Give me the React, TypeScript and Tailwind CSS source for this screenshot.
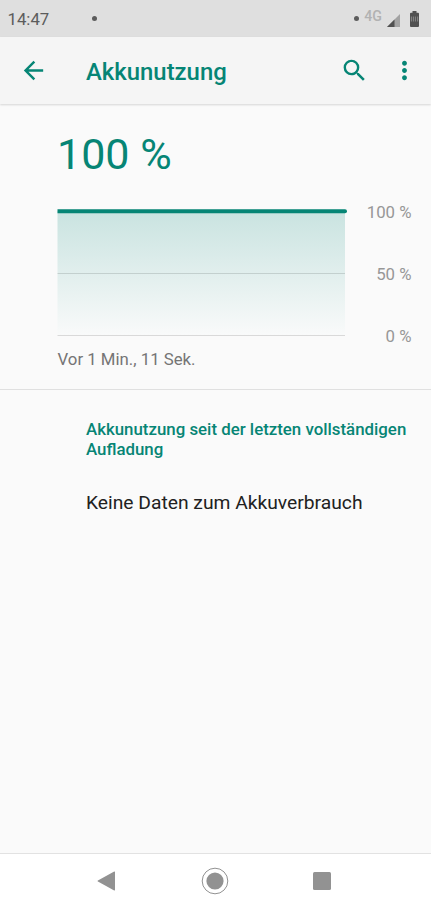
import React from 'react';

const axisLabels = ['100 %', '50 %', '0 %'];

const StatusBar: React.FC = () => (
  <div className="flex h-[37px] shrink-0 items-center bg-[#dfdfdf] pr-3 pl-[7.5px] text-[#5c5c5c]">
    <span className="w-[84.5px] text-[16.8px] leading-5">14:47</span>
    <span className="size-[5px] rounded-full bg-[#5c5c5c]" />
    <span className="ml-auto size-[5px] rounded-full bg-[#5c5c5c]" />
    <span className="mb-1.5 ml-[5px] text-[14.2px] leading-4 font-medium text-[#b2b2b2]">4G</span>
    <svg className="mt-1 ml-[5px]" width="13" height="13" viewBox="0 0 13 13">
      <path d="M13 0v13H0z" fill="#a3a3a3" />
      <path d="M7.5 5.5V13H0z" fill="#515151" />
    </svg>
    <svg className="ml-2.5" width="9" height="16" viewBox="0 0 9 16">
      <path d="M2.5 0h4v1.7H8a1 1 0 0 1 1 1V15a1 1 0 0 1-1 1H1a1 1 0 0 1-1-1V2.7a1 1 0 0 1 1-1h1.5z" fill="#515151" />
      <path d="M1.4 5.5v5M3.4 5.5v5M5.4 5.5v5M7.6 5.5v5" stroke="#8f8f8f" strokeWidth="0.9" />
    </svg>
  </div>
);

const AppBar: React.FC = () => (
  <header className="flex h-[67px] shrink-0 items-center bg-[#f5f5f5] pr-3 pl-[19px] text-[#068575] shadow-[0_1px_2px_rgba(0,0,0,0.15)]">
    <svg width="29" height="29" viewBox="0 0 24 24" fill="currentColor">
      <path d="M20 11H7.83l5.59-5.59L12 4l-8 8 8 8 1.41-1.41L7.83 13H20v-2z" />
    </svg>
    <h1 className="ml-[38px] pt-0.5 text-[23.9px] leading-7 font-medium">Akkunutzung</h1>
    <svg className="ml-auto" width="29" height="29" viewBox="0 0 24 24" fill="currentColor">
      <path d="M15.5 14h-.79l-.28-.27A6.471 6.471 0 0 0 16 9.5 6.5 6.5 0 1 0 9.5 16c1.61 0 3.09-.59 4.23-1.57l.27.28v.79l5 4.99L20.49 19l-4.99-5zm-6 0C7.01 14 5 11.99 5 9.5S7.01 5 9.5 5 14 7.01 14 9.5 11.99 14 9.5 14z" />
    </svg>
    <svg className="ml-[21px]" width="29" height="29" viewBox="0 0 24 24" fill="currentColor">
      <path d="M12 8c1.1 0 2-.9 2-2s-.9-2-2-2-2 .9-2 2 .9 2 2 2zm0 2c-1.1 0-2 .9-2 2s.9 2 2 2 2-.9 2-2-.9-2-2-2zm0 6c-1.1 0-2 .9-2 2s.9 2 2 2 2-.9 2-2-.9-2-2-2z" />
    </svg>
  </header>
);

const BatteryChart: React.FC = () => (
  <div className="mt-[23px] flex justify-between">
    <svg className="mt-0.5" width="290" height="134" viewBox="0 0 290 134">
      <defs>
        <linearGradient id="level" x1="0" y1="0" x2="0" y2="1">
          <stop offset="0" stopColor="#c9e3e0" />
          <stop offset="1" stopColor="#f9fafa" />
        </linearGradient>
      </defs>
      <rect x="0.5" y="7" width="287.5" height="124" fill="url(#level)" />
      <path d="M0.5 69.5H288M0.5 131.5H288" stroke="#000" strokeOpacity="0.13" />
      <path d="M0.5 5.3H288a2 2 0 0 1 0 4H0.5z" fill="#068575" />
    </svg>
    <div className="flex h-[144px] flex-col justify-between text-right text-[16.8px] leading-5 text-[#979797]">
      {axisLabels.map((label) => (
        <span key={label}>{label}</span>
      ))}
    </div>
  </div>
);

const NavigationBar: React.FC = () => (
  <nav className="flex h-[57px] shrink-0 items-center justify-between border-t border-[#e2e2e2] bg-white pr-[100px] pb-0.5 pl-[97px] text-[#929292]">
    <svg width="19" height="20" viewBox="0 0 19 20" fill="currentColor">
      <path d="M17.2.6.9 9.4q-.9.6 0 1.2l16.3 8.8q.8.3.8-.6V1.2q0-.9-.8-.6z" />
    </svg>
    <svg className="ml-px" width="28" height="28" viewBox="0 0 28 28" fill="currentColor">
      <circle cx="14" cy="14" r="8.6" />
      <circle cx="14" cy="14" r="12.8" fill="none" stroke="currentColor" />
    </svg>
    <span className="size-[18px] rounded-[1.5px] bg-[#929292]" />
  </nav>
);

export default function App() {
  return (
    <div className="flex h-[910px] w-[431px] flex-col bg-[#fafafa] font-['Roboto',sans-serif]">
      <StatusBar />
      <AppBar />
      <main className="flex-1">
        <section className="h-[286px] border-b border-[#e0e0e0] pt-[25px] pr-[19.5px] pl-[57px]">
          <div className="text-[43px] leading-[50px] text-[#068575]">100 %</div>
          <BatteryChart />
          <p className="mt-[3px] pl-[0.5px] text-[16.8px] leading-5 text-[#757575]">Vor 1 Min., 11 Sek.</p>
        </section>
        <section className="pt-[29px] pl-[86px]">
          <h2 className="text-[16.85px] leading-5 font-medium text-[#068575]">
            Akkunutzung seit der letzten vollständigen
            <br />
            Aufladung
          </h2>
          <p className="mt-8 text-[19.25px] leading-6 text-[#212121]">Keine Daten zum Akkuverbrauch</p>
        </section>
      </main>
      <NavigationBar />
    </div>
  );
}
